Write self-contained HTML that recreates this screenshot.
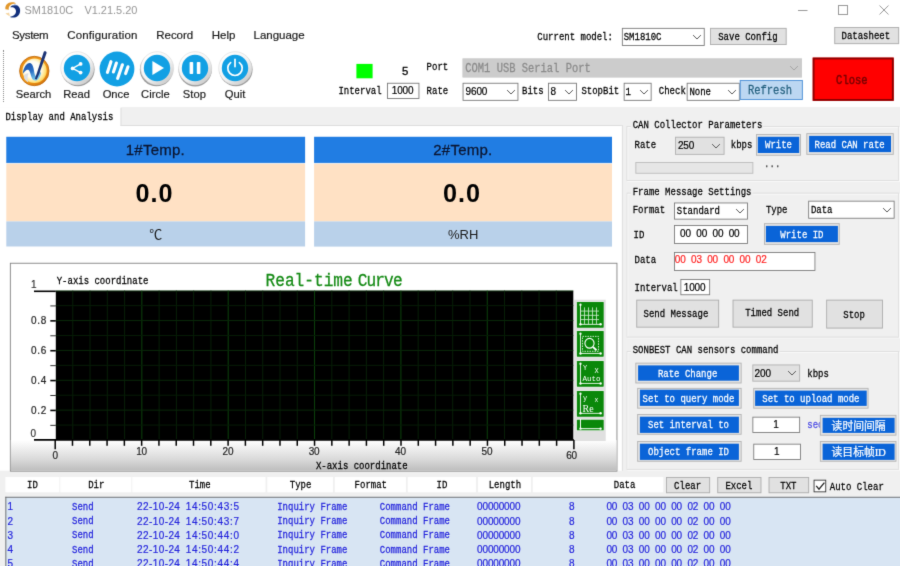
<!DOCTYPE html>
<html lang="en">
<head>
<meta charset="utf-8">
<title>SM1810C V1.21.5.20</title>
<style>
html,body{margin:0;padding:0;}
body{width:900px;height:566px;overflow:hidden;background:#f0f0f0;position:relative;font-family:"Liberation Sans",sans-serif;}
#wrap{position:absolute;left:0;top:0;width:900px;height:566px;overflow:hidden;background:#f0f0f0;filter:url(#soft);}
#app{position:absolute;left:0;top:0;width:1000px;height:629px;transform:scale(0.9);transform-origin:0 0;}
#ov{position:absolute;left:0;top:0;width:900px;height:566px;}
.a{position:absolute;white-space:nowrap;box-sizing:border-box;}
.m{font-family:"Liberation Mono",monospace;transform-origin:0 50%;white-space:pre;-webkit-text-stroke:0.3px currentColor;}
.s{font-family:"Liberation Sans",sans-serif;}
.d{font-family:"Liberation Sans",sans-serif;white-space:pre;font-size:11.1px;line-height:15.56px;letter-spacing:-0.17px;-webkit-text-stroke:0.2px currentColor;}
.cm{font-family:"Liberation Serif",serif;font-size:12px;letter-spacing:-0.3px;}
.c{font-family:"Liberation Sans","Noto Sans CJK SC",sans-serif;color:#fff;font-size:12px;text-align:center;-webkit-text-stroke:0.25px #fff;}
</style>
</head>
<body>
<svg width="0" height="0" style="position:absolute" aria-hidden="true"><defs><filter id="soft" x="0" y="0" width="100%" height="100%" color-interpolation-filters="sRGB"><feConvolveMatrix order="3" kernelMatrix="0.0113 0.0838 0.0113 0.0838 0.6193 0.0838 0.0113 0.0838 0.0113" divisor="1" edgeMode="duplicate" preserveAlpha="true"/></filter></defs></svg>
<div id="wrap">
<div id="app">
<div class="a" style="left:0px;top:0px;width:1000px;height:119.44px;background:#fff;"></div>
<div class="a s" style="top:3.67px;font-size:12.17px;line-height:15.56px;color:#969696;left:27.22px;white-space:pre;word-spacing:2.9px;">SM1810C  V1.21.5.20</div>
<div class="a s" style="top:31.11px;font-size:12.78px;line-height:16.67px;color:#1a1a1a;left:13.33px;letter-spacing:-0.37px;-webkit-text-stroke:0.2px #1a1a1a;">System</div>
<div class="a s" style="top:31.11px;font-size:12.78px;line-height:16.67px;color:#1a1a1a;left:74.67px;letter-spacing:0.17px;-webkit-text-stroke:0.2px #1a1a1a;">Configuration</div>
<div class="a s" style="top:31.11px;font-size:12.78px;line-height:16.67px;color:#1a1a1a;left:173.56px;letter-spacing:0px;-webkit-text-stroke:0.2px #1a1a1a;">Record</div>
<div class="a s" style="top:31.11px;font-size:12.78px;line-height:16.67px;color:#1a1a1a;left:235.22px;letter-spacing:0px;-webkit-text-stroke:0.2px #1a1a1a;">Help</div>
<div class="a s" style="top:31.11px;font-size:12.78px;line-height:16.67px;color:#1a1a1a;left:281.67px;letter-spacing:0px;-webkit-text-stroke:0.2px #1a1a1a;">Language</div>
<div class="a s" style="top:96.67px;font-size:12.44px;line-height:16.67px;color:#1a1a1a;left:-129.33px;width:333.33px;text-align:center;-webkit-text-stroke:0.2px #1a1a1a;">Search</div>
<div class="a s" style="top:96.67px;font-size:12.44px;line-height:16.67px;color:#1a1a1a;left:-81.67px;width:333.33px;text-align:center;-webkit-text-stroke:0.2px #1a1a1a;">Read</div>
<div class="a s" style="top:96.67px;font-size:12.44px;line-height:16.67px;color:#1a1a1a;left:-37.78px;width:333.33px;text-align:center;-webkit-text-stroke:0.2px #1a1a1a;">Once</div>
<div class="a s" style="top:96.67px;font-size:12.44px;line-height:16.67px;color:#1a1a1a;left:6px;width:333.33px;text-align:center;-webkit-text-stroke:0.2px #1a1a1a;">Circle</div>
<div class="a s" style="top:96.67px;font-size:12.44px;line-height:16.67px;color:#1a1a1a;left:49.33px;width:333.33px;text-align:center;-webkit-text-stroke:0.2px #1a1a1a;">Stop</div>
<div class="a s" style="top:96.67px;font-size:12.44px;line-height:16.67px;color:#1a1a1a;left:94.44px;width:333.33px;text-align:center;-webkit-text-stroke:0.2px #1a1a1a;">Quit</div>
<div class="a m" style="left:596.78px;top:33.89px;font-size:13.11px;line-height:15.56px;transform:scaleX(0.7627);">Current model:</div>
<div class="a" style="left:690.78px;top:30.56px;width:92.22px;height:20.33px;background:#fff;border:1px solid #7a7a7a;"></div>
<div class="a m" style="left:693.22px;top:33.5px;font-size:13.11px;line-height:15.56px;transform:scaleX(0.7627);">SM1810C</div>
<div class="a" style="left:788.56px;top:31.11px;width:85.67px;height:19.22px;background:#e1e1e1;border:1px solid #adadad;"></div>
<div class="a m" style="left:797.94px;top:33.5px;font-size:13.11px;line-height:15.56px;transform:scaleX(0.7627);">Save Config</div>
<div class="a" style="left:926.67px;top:30px;width:72px;height:19.22px;background:#e1e1e1;border:1px solid #adadad;"></div>
<div class="a m" style="left:935.22px;top:32.39px;font-size:13.11px;line-height:15.56px;transform:scaleX(0.7627);">Datasheet</div>
<div class="a" style="left:395.56px;top:71.11px;width:18.33px;height:15.56px;background:#00ff00;"></div>
<div class="a d" style="left:446.56px;top:71.56px;font-size:12.6px;-webkit-text-stroke:0.35px #000;">5</div>
<div class="a m" style="left:474px;top:67.22px;font-size:13.11px;line-height:15.56px;transform:scaleX(0.7627);">Port</div>
<div class="a m" style="left:376.22px;top:93.89px;font-size:13.11px;line-height:15.56px;transform:scaleX(0.7627);">Interval</div>
<div class="a" style="left:430px;top:92.22px;width:35.56px;height:17.33px;background:#fff;border:1px solid #7a7a7a;"></div>
<div class="a d" style="left:435.33px;top:93.44px;">1000</div>
<div class="a m" style="left:474px;top:93.89px;font-size:13.11px;line-height:15.56px;transform:scaleX(0.7627);">Rate</div>
<div class="a" style="left:514.44px;top:65.22px;width:377px;height:20.33px;background:#cccccc;border:1px solid #cccccc;"></div>
<div class="a m" style="left:517.33px;top:69.28px;font-size:14px;line-height:15.56px;color:#8a8a8a;transform:scaleX(0.8294);">COM1 USB Serial Port</div>
<div class="a" style="left:514.44px;top:92px;width:61.89px;height:19.89px;background:#fff;border:1px solid #7a7a7a;"></div>
<div class="a d" style="left:517.33px;top:94.5px;">9600</div>
<div class="a m" style="left:580.44px;top:93.89px;font-size:13.11px;line-height:15.56px;transform:scaleX(0.7627);">Bits</div>
<div class="a" style="left:608.89px;top:92px;width:32.56px;height:19.89px;background:#fff;border:1px solid #7a7a7a;"></div>
<div class="a d" style="left:611.78px;top:94.5px;">8</div>
<div class="a m" style="left:646.33px;top:93.89px;font-size:13.11px;line-height:15.56px;transform:scaleX(0.7627);">StopBit</div>
<div class="a" style="left:692.56px;top:92px;width:31.89px;height:19.89px;background:#fff;border:1px solid #7a7a7a;"></div>
<div class="a m" style="left:695.44px;top:94.72px;font-size:13.11px;line-height:15.56px;transform:scaleX(0.7627);">1</div>
<div class="a m" style="left:732.11px;top:93.89px;font-size:13.11px;line-height:15.56px;transform:scaleX(0.7627);">Check</div>
<div class="a" style="left:763.33px;top:92px;width:58.89px;height:19.89px;background:#fff;border:1px solid #7a7a7a;"></div>
<div class="a m" style="left:766.22px;top:94.72px;font-size:13.11px;line-height:15.56px;transform:scaleX(0.7627);">None</div>
<div class="a" style="left:822.22px;top:88.89px;width:69.67px;height:21.89px;background:#bcd7f2;border:1px solid #4a8fd8;"></div>
<div class="a m" style="left:831.28px;top:92.78px;font-size:14.44px;line-height:15.56px;color:#24607f;transform:scaleX(0.8077);">Refresh</div>
<div class="a" style="left:902.67px;top:64.22px;width:89.89px;height:48px;background:#ff0000;border:2px solid #8a0000;"></div>
<div class="a m" style="left:928.72px;top:82.33px;font-size:14.44px;line-height:15.56px;color:#7a0000;transform:scaleX(0.8077);-webkit-text-stroke:0.6px #7a0000;">Close</div>
<div class="a" style="left:0px;top:119.44px;width:133.89px;height:21.67px;background:#fff;"></div>
<div class="a" style="left:0px;top:139.78px;width:691.11px;height:383.56px;background:#fff;"></div>
<div class="a" style="left:133.89px;top:120px;width:557.22px;height:20px;background:#f0f0f0;border-bottom:1px solid #dcdcdc;border-left:1px solid #dcdcdc;box-sizing:border-box;"></div>
<div class="a" style="left:691.11px;top:138.89px;width:1.11px;height:384.44px;background:#dcdcdc;"></div>
<div class="a m" style="left:5.67px;top:122px;font-size:13.11px;line-height:15.56px;transform:scaleX(0.7627);">Display and Analysis</div>
<div class="a" style="left:7px;top:151.89px;width:331.89px;height:30.33px;background:#e4ebf3;"></div>
<div class="a" style="left:7px;top:151.89px;width:331.89px;height:28.78px;background:#217de3;"></div>
<div class="a" style="left:7px;top:181.89px;width:331.89px;height:64.11px;background:#ffe1c4;"></div>
<div class="a" style="left:7px;top:246px;width:331.89px;height:28.22px;background:#b9d1ea;"></div>
<div class="a s" style="top:155.56px;font-size:16.67px;line-height:22.22px;color:#0b1530;left:5.94px;width:333.33px;text-align:center;letter-spacing:0.28px;-webkit-text-stroke:0.28px #0b1530;">1#Temp.</div>
<div class="a s" style="top:196.67px;font-size:28px;line-height:36.67px;color:#000;left:4.94px;width:333.33px;text-align:center;font-weight:bold;letter-spacing:1.11px;">0.0</div>
<div class="a s" style="top:251.11px;font-size:14.44px;line-height:18.89px;color:#1a1a1a;left:6.28px;width:333.33px;text-align:center;font-family:'Liberation Sans','Noto Sans CJK SC',sans-serif;">℃</div>
<div class="a" style="left:348.89px;top:151.89px;width:331.44px;height:30.33px;background:#e4ebf3;"></div>
<div class="a" style="left:348.89px;top:151.89px;width:331.44px;height:28.78px;background:#217de3;"></div>
<div class="a" style="left:348.89px;top:181.89px;width:331.44px;height:64.11px;background:#ffe1c4;"></div>
<div class="a" style="left:348.89px;top:246px;width:331.44px;height:28.22px;background:#b9d1ea;"></div>
<div class="a s" style="top:155.56px;font-size:16.67px;line-height:22.22px;color:#0b1530;left:347.61px;width:333.33px;text-align:center;letter-spacing:0.28px;-webkit-text-stroke:0.28px #0b1530;">2#Temp.</div>
<div class="a s" style="top:196.67px;font-size:28px;line-height:36.67px;color:#000;left:346.61px;width:333.33px;text-align:center;font-weight:bold;letter-spacing:1.11px;">0.0</div>
<div class="a s" style="top:251.11px;font-size:14.44px;line-height:18.89px;color:#1a1a1a;left:347.94px;width:333.33px;text-align:center;font-family:'Liberation Sans','Noto Sans CJK SC',sans-serif;">%RH</div>
<div class="a" style="left:11.11px;top:291.67px;width:675.33px;height:232px;background:#fff;border:1px solid #828282;"></div>
<div class="a" style="left:12.22px;top:488.89px;width:673.11px;height:33.67px;background:linear-gradient(#ffffff 0%, #f0f0f0 25%, #d8d8d8 65%, #bdbdbd 100%);"></div>
<div class="a d" style="left:34.33px;top:309.11px;color:#333;">1</div>
<div class="a d" style="left:34.44px;top:448.82px;color:#222;letter-spacing:0.86px;">0.2</div>
<div class="a d" style="left:34.44px;top:415.64px;color:#222;letter-spacing:0.86px;">0.4</div>
<div class="a d" style="left:34.44px;top:382.47px;color:#222;letter-spacing:0.86px;">0.6</div>
<div class="a d" style="left:34.44px;top:349.29px;color:#222;letter-spacing:0.86px;">0.8</div>
<div class="a d" style="left:34px;top:473.67px;color:#333;">0</div>
<div class="a d" style="left:58.22px;top:498.89px;color:#222;">0</div>
<div class="a d" style="left:151.28px;top:494.78px;color:#222;">10</div>
<div class="a d" style="left:247.33px;top:494.78px;color:#222;">20</div>
<div class="a d" style="left:342.94px;top:494.78px;color:#222;">30</div>
<div class="a d" style="left:439px;top:494.78px;color:#222;">40</div>
<div class="a d" style="left:535.06px;top:494.78px;color:#222;">50</div>
<div class="a d" style="left:629.11px;top:498.89px;color:#222;">60</div>
<div class="a m" style="left:63.44px;top:305.22px;font-size:11.78px;line-height:15.56px;transform:scaleX(0.8491);">Y-axis coordinate</div>
<div class="a m" style="left:350.67px;top:511.22px;font-size:11.78px;line-height:15.56px;transform:scaleX(0.8491);">X-axis coordinate</div>
<div class="a m" style="left:295.11px;top:300.89px;font-size:20.22px;line-height:24.44px;color:#148a14;transform:scaleX(0.8883);word-spacing:-5.88px;">Real-time <span style="letter-spacing:-1.13px">Curve</span></div>
<div class="a" style="left:637.78px;top:333.33px;width:35px;height:156.67px;background:#e0e0e0;"></div>
<div class="a" style="left:696.11px;top:139.56px;width:303px;height:61px;border:1px solid #dedede;box-shadow:inset 1px 1px 0 rgba(255,255,255,0.75), 1px 1px 0 rgba(255,255,255,0.75);"></div>
<div class="a" style="left:701.11px;top:132.89px;width:147.33px;height:14.44px;background:#f0f0f0;"></div>
<div class="a m" style="left:702.78px;top:131.33px;font-size:13.11px;line-height:15.56px;transform:scaleX(0.7627);">CAN Collector Parameters</div>
<div class="a m" style="left:705.11px;top:154.44px;font-size:13.11px;line-height:15.56px;transform:scaleX(0.7627);">Rate</div>
<div class="a" style="left:750.33px;top:151.89px;width:54.33px;height:19.78px;background:#e1e1e1;border:1px solid #b2b2b2;"></div>
<div class="a d" style="left:753.22px;top:155px;">250</div>
<div class="a m" style="left:811.56px;top:154.44px;font-size:13.11px;line-height:15.56px;transform:scaleX(0.7627);">kbps</div>
<div class="a" style="left:839.78px;top:149.11px;width:50.56px;height:23.44px;background:#e4e4e4;border:1px solid #b4b4b4;"></div>
<div class="a" style="left:842.22px;top:151.89px;width:45.78px;height:18.11px;background:#0a64d8;"></div>
<div class="a m" style="left:849.67px;top:154.28px;font-size:13.11px;line-height:15.56px;color:#fff;transform:scaleX(0.7627);">Write</div>
<div class="a" style="left:895.89px;top:147.78px;width:97.11px;height:23.89px;background:#e4e4e4;border:1px solid #b4b4b4;"></div>
<div class="a" style="left:898.56px;top:150.89px;width:91.78px;height:18px;background:#0a64d8;"></div>
<div class="a m" style="left:905px;top:153.22px;font-size:13.11px;line-height:15.56px;color:#fff;transform:scaleX(0.7627);">Read CAN rate</div>
<div class="a" style="left:705.56px;top:180px;width:131.89px;height:12.56px;background:#e6e6e6;border:1px solid #bcbcbc;"></div>
<div class="a m" style="left:848.67px;top:174.56px;font-size:13.11px;line-height:15.56px;color:#444;transform:scaleX(0.7627);">...</div>
<div class="a" style="left:696.11px;top:213.89px;width:303px;height:161.44px;border:1px solid #dedede;box-shadow:inset 1px 1px 0 rgba(255,255,255,0.75), 1px 1px 0 rgba(255,255,255,0.75);"></div>
<div class="a" style="left:701.11px;top:207.22px;width:135.33px;height:14.44px;background:#f0f0f0;"></div>
<div class="a m" style="left:702.78px;top:205.89px;font-size:13.11px;line-height:15.56px;transform:scaleX(0.7627);">Frame Message Settings</div>
<div class="a m" style="left:702.89px;top:226.44px;font-size:13.11px;line-height:15.56px;transform:scaleX(0.7627);">Format</div>
<div class="a" style="left:749.11px;top:225px;width:82.33px;height:19.44px;background:#fff;border:1px solid #7a7a7a;"></div>
<div class="a m" style="left:752px;top:226.72px;font-size:13.11px;line-height:15.56px;transform:scaleX(0.7627);">Standard</div>
<div class="a m" style="left:851px;top:225.78px;font-size:13.11px;line-height:15.56px;transform:scaleX(0.7627);">Type</div>
<div class="a" style="left:898.11px;top:222.56px;width:96.33px;height:20.44px;background:#fff;border:1px solid #7a7a7a;"></div>
<div class="a m" style="left:901px;top:225.56px;font-size:13.11px;line-height:15.56px;transform:scaleX(0.7627);">Data</div>
<div class="a m" style="left:704.22px;top:253px;font-size:13.11px;line-height:15.56px;transform:scaleX(0.7627);">ID</div>
<div class="a" style="left:748.89px;top:250px;width:82.56px;height:20.56px;background:#fff;border:1px solid #7a7a7a;"></div>
<div class="a d" style="left:755.67px;top:252.28px;word-spacing:3.09px;">00 00 00 00</div>
<div class="a" style="left:848.56px;top:248.11px;width:84.78px;height:23.78px;background:#e4e4e4;border:1px solid #b4b4b4;"></div>
<div class="a" style="left:851.33px;top:250.89px;width:79.56px;height:18px;background:#0a64d8;"></div>
<div class="a m" style="left:866.67px;top:253.22px;font-size:13.11px;line-height:15.56px;color:#fff;transform:scaleX(0.7627);">Write ID</div>
<div class="a m" style="left:705.11px;top:281.11px;font-size:13.11px;line-height:15.56px;transform:scaleX(0.7627);">Data</div>
<div class="a" style="left:748.56px;top:279.56px;width:157px;height:21px;background:#fff;border:1px solid #7a7a7a;"></div>
<div class="a d" style="left:749.78px;top:280.72px;color:#ff2020;word-spacing:3.09px;">00 03 00 00 00 02</div>
<div class="a m" style="left:705.11px;top:311.67px;font-size:13.11px;line-height:15.56px;transform:scaleX(0.7627);">Interval</div>
<div class="a" style="left:755.56px;top:310.22px;width:33.33px;height:17.56px;background:#fff;border:1px solid #7a7a7a;"></div>
<div class="a d" style="left:759.78px;top:311.56px;">1000</div>
<div class="a" style="left:706.89px;top:333px;width:91.67px;height:31.44px;background:#e1e1e1;border:1px solid #adadad;"></div>
<div class="a m" style="left:715.11px;top:341.06px;font-size:13.11px;line-height:15.56px;transform:scaleX(0.7627);">Send Message</div>
<div class="a" style="left:813.56px;top:333px;width:89.22px;height:31px;background:#e1e1e1;border:1px solid #adadad;"></div>
<div class="a m" style="left:827.72px;top:340.17px;font-size:13.11px;line-height:15.56px;transform:scaleX(0.7627);">Timed Send</div>
<div class="a" style="left:917.56px;top:333px;width:63.89px;height:31.78px;background:#e1e1e1;border:1px solid #adadad;"></div>
<div class="a m" style="left:937.06px;top:341.67px;font-size:13.11px;line-height:15.56px;transform:scaleX(0.7627);">Stop</div>
<div class="a" style="left:696.11px;top:390.33px;width:303px;height:131.67px;border:1px solid #dedede;box-shadow:inset 1px 1px 0 rgba(255,255,255,0.75), 1px 1px 0 rgba(255,255,255,0.75);"></div>
<div class="a" style="left:701.11px;top:383.67px;width:165.33px;height:14.44px;background:#f0f0f0;"></div>
<div class="a m" style="left:702.78px;top:381.44px;font-size:13.11px;line-height:15.56px;transform:scaleX(0.7627);">SONBEST CAN sensors command</div>
<div class="a" style="left:705.89px;top:403.11px;width:117.67px;height:23.22px;background:#e4e4e4;border:1px solid #b4b4b4;"></div>
<div class="a" style="left:708.67px;top:406.11px;width:112.22px;height:17px;background:#0a64d8;"></div>
<div class="a m" style="left:731.33px;top:408.17px;font-size:13.11px;line-height:15.56px;color:#fff;transform:scaleX(0.7627);">Rate Change</div>
<div class="a" style="left:835.56px;top:404.78px;width:53.89px;height:19.33px;background:#e1e1e1;border:1px solid #b2b2b2;"></div>
<div class="a d" style="left:838.44px;top:407.67px;">200</div>
<div class="a m" style="left:896.78px;top:408.11px;font-size:13.11px;line-height:15.56px;transform:scaleX(0.7627);">kbps</div>
<div class="a" style="left:707.78px;top:430.56px;width:115.78px;height:23.11px;background:#e4e4e4;border:1px solid #b4b4b4;"></div>
<div class="a" style="left:710.56px;top:433.33px;width:110.33px;height:17.22px;background:#0a64d8;"></div>
<div class="a m" style="left:714.28px;top:435.5px;font-size:13.11px;line-height:15.56px;color:#fff;transform:scaleX(0.7627);">Set to query mode</div>
<div class="a" style="left:836.67px;top:431.11px;width:128.67px;height:23px;background:#e4e4e4;border:1px solid #b4b4b4;"></div>
<div class="a" style="left:839.44px;top:433.89px;width:123.11px;height:17.44px;background:#0a64d8;"></div>
<div class="a m" style="left:846.56px;top:436.17px;font-size:13.11px;line-height:15.56px;color:#fff;transform:scaleX(0.7627);">Set to upload mode</div>
<div class="a" style="left:707.78px;top:460.44px;width:115.78px;height:22.89px;background:#e4e4e4;border:1px solid #b4b4b4;"></div>
<div class="a" style="left:710.56px;top:463.11px;width:110.33px;height:17.44px;background:#0a64d8;"></div>
<div class="a m" style="left:720.28px;top:465.39px;font-size:13.11px;line-height:15.56px;color:#fff;transform:scaleX(0.7627);">Set interval to</div>
<div class="a" style="left:835.56px;top:462.56px;width:53.89px;height:18px;background:#fff;border:1px solid #7a7a7a;"></div>
<div class="a d" style="left:859.06px;top:464.11px;">1</div>
<div class="a m" style="left:896.78px;top:465px;font-size:13.11px;line-height:15.56px;color:#4c4ce4;transform:scaleX(0.7627);">sec</div>
<div class="a" style="left:911.44px;top:461.11px;width:84.89px;height:23.11px;background:#e4e4e4;border:1px solid #b4b4b4;"></div>
<div class="a" style="left:914.44px;top:463.89px;width:79.11px;height:17.56px;background:#0a64d8;"></div>
<div class="a c" style="left:914.44px;top:466.33px;width:79.11px;height:17.56px;line-height:17.56px;">读时间间隔</div>
<div class="a" style="left:707.78px;top:490.33px;width:115.78px;height:23px;background:#e4e4e4;border:1px solid #b4b4b4;"></div>
<div class="a" style="left:710.56px;top:493px;width:110.33px;height:17.78px;background:#0a64d8;"></div>
<div class="a m" style="left:720.28px;top:495.44px;font-size:13.11px;line-height:15.56px;color:#fff;transform:scaleX(0.7627);">Object frame ID</div>
<div class="a" style="left:836.67px;top:492.56px;width:53.67px;height:18px;background:#fff;border:1px solid #7a7a7a;"></div>
<div class="a d" style="left:860.06px;top:494.11px;">1</div>
<div class="a" style="left:911.44px;top:490.22px;width:84.89px;height:23.11px;background:#e4e4e4;border:1px solid #b4b4b4;"></div>
<div class="a" style="left:914.44px;top:493px;width:79.11px;height:17.56px;background:#0a64d8;"></div>
<div class="a c" style="left:914.44px;top:495.44px;width:79.11px;height:17.56px;line-height:17.56px;">读目标帧<span class="cm">ID</span></div>
<div class="a" style="left:5.89px;top:529.67px;width:59.67px;height:17.44px;background:#fff;"></div>
<div class="a m" style="left:30.39px;top:530.89px;font-size:13.11px;line-height:15.56px;transform:scaleX(0.7627);">ID</div>
<div class="a" style="left:67.11px;top:529.67px;width:78.67px;height:17.44px;background:#fff;"></div>
<div class="a m" style="left:98.11px;top:530.89px;font-size:13.11px;line-height:15.56px;transform:scaleX(0.7627);">Dir</div>
<div class="a" style="left:147.22px;top:529.67px;width:147.78px;height:17.44px;background:#fff;"></div>
<div class="a m" style="left:209.78px;top:530.89px;font-size:13.11px;line-height:15.56px;transform:scaleX(0.7627);">Time</div>
<div class="a" style="left:297px;top:529.67px;width:73px;height:17.44px;background:#fff;"></div>
<div class="a m" style="left:322.17px;top:530.89px;font-size:13.11px;line-height:15.56px;transform:scaleX(0.7627);">Type</div>
<div class="a" style="left:372px;top:529.67px;width:78.56px;height:17.44px;background:#fff;"></div>
<div class="a m" style="left:393.94px;top:530.89px;font-size:13.11px;line-height:15.56px;transform:scaleX(0.7627);">Format</div>
<div class="a" style="left:452.56px;top:529.67px;width:76.33px;height:17.44px;background:#fff;"></div>
<div class="a m" style="left:485.39px;top:530.89px;font-size:13.11px;line-height:15.56px;transform:scaleX(0.7627);">ID</div>
<div class="a" style="left:530.89px;top:529.67px;width:59.11px;height:17.44px;background:#fff;"></div>
<div class="a m" style="left:543.11px;top:530.89px;font-size:13.11px;line-height:15.56px;transform:scaleX(0.7627);">Length</div>
<div class="a" style="left:592px;top:529.67px;width:144.67px;height:17.44px;background:#fff;"></div>
<div class="a m" style="left:682.22px;top:530.89px;font-size:13.11px;line-height:15.56px;transform:scaleX(0.7627);">Data</div>
<div class="a" style="left:740px;top:530.22px;width:48.67px;height:17.56px;background:#e1e1e1;border:1px solid #adadad;"></div>
<div class="a m" style="left:748.89px;top:531.78px;font-size:13.11px;line-height:15.56px;transform:scaleX(0.7627);">Clear</div>
<div class="a" style="left:797px;top:530.22px;width:48.56px;height:17.56px;background:#e1e1e1;border:1px solid #adadad;"></div>
<div class="a m" style="left:805.83px;top:531.78px;font-size:13.11px;line-height:15.56px;transform:scaleX(0.7627);">Excel</div>
<div class="a" style="left:853.78px;top:530.22px;width:45.33px;height:17.56px;background:#e1e1e1;border:1px solid #adadad;"></div>
<div class="a m" style="left:867px;top:531.78px;font-size:13.11px;line-height:15.56px;transform:scaleX(0.7627);">TXT</div>
<div class="a" style="left:904.22px;top:533.44px;width:13.44px;height:13.44px;background:#fff;border:1px solid #333;"></div>
<div class="a m" style="left:922.33px;top:533px;font-size:13.11px;line-height:15.56px;transform:scaleX(0.7627);">Auto Clear</div>
<div class="a" style="left:6.11px;top:552.44px;width:996.11px;height:80.89px;background:#d8e5f3;border-top:1.7px solid #686868;border-left:1.7px solid #686868;"></div>
<div class="a d" style="left:8.44px;top:555.89px;color:#2424dc;">1</div>
<div class="a m" style="left:79.56px;top:555.56px;font-size:13.11px;line-height:15.56px;color:#2424dc;transform:scaleX(0.7627);">Send</div>
<div class="a d" style="left:152.33px;top:555.89px;color:#2424dc;letter-spacing:0.45px;word-spacing:2.47px;">22-10-24 <span style="letter-spacing:0.75px">14:50:43:5</span></div>
<div class="a m" style="left:307.89px;top:555.56px;font-size:13.11px;line-height:15.56px;color:#2424dc;transform:scaleX(0.7627);">Inquiry Frame</div>
<div class="a m" style="left:421.78px;top:555.56px;font-size:13.11px;line-height:15.56px;color:#2424dc;transform:scaleX(0.7627);">Command Frame</div>
<div class="a d" style="left:530.11px;top:555.89px;color:#2424dc;">00000000</div>
<div class="a d" style="left:632.11px;top:555.89px;color:#2424dc;">8</div>
<div class="a d" style="left:673.78px;top:555.89px;color:#2424dc;word-spacing:3.09px;">00 03 00 00 00 02 00 00</div>
<div class="a d" style="left:8.44px;top:571.72px;color:#2424dc;">2</div>
<div class="a m" style="left:79.56px;top:571.39px;font-size:13.11px;line-height:15.56px;color:#2424dc;transform:scaleX(0.7627);">Send</div>
<div class="a d" style="left:152.33px;top:571.72px;color:#2424dc;letter-spacing:0.45px;word-spacing:2.47px;">22-10-24 <span style="letter-spacing:0.75px">14:50:43:7</span></div>
<div class="a m" style="left:307.89px;top:571.39px;font-size:13.11px;line-height:15.56px;color:#2424dc;transform:scaleX(0.7627);">Inquiry Frame</div>
<div class="a m" style="left:421.78px;top:571.39px;font-size:13.11px;line-height:15.56px;color:#2424dc;transform:scaleX(0.7627);">Command Frame</div>
<div class="a d" style="left:530.11px;top:571.72px;color:#2424dc;">00000000</div>
<div class="a d" style="left:632.11px;top:571.72px;color:#2424dc;">8</div>
<div class="a d" style="left:673.78px;top:571.72px;color:#2424dc;word-spacing:3.09px;">00 03 00 00 00 02 00 00</div>
<div class="a d" style="left:8.44px;top:587.56px;color:#2424dc;">3</div>
<div class="a m" style="left:79.56px;top:587.22px;font-size:13.11px;line-height:15.56px;color:#2424dc;transform:scaleX(0.7627);">Send</div>
<div class="a d" style="left:152.33px;top:587.56px;color:#2424dc;letter-spacing:0.45px;word-spacing:2.47px;">22-10-24 <span style="letter-spacing:0.75px">14:50:44:0</span></div>
<div class="a m" style="left:307.89px;top:587.22px;font-size:13.11px;line-height:15.56px;color:#2424dc;transform:scaleX(0.7627);">Inquiry Frame</div>
<div class="a m" style="left:421.78px;top:587.22px;font-size:13.11px;line-height:15.56px;color:#2424dc;transform:scaleX(0.7627);">Command Frame</div>
<div class="a d" style="left:530.11px;top:587.56px;color:#2424dc;">00000000</div>
<div class="a d" style="left:632.11px;top:587.56px;color:#2424dc;">8</div>
<div class="a d" style="left:673.78px;top:587.56px;color:#2424dc;word-spacing:3.09px;">00 03 00 00 00 02 00 00</div>
<div class="a d" style="left:8.44px;top:603.39px;color:#2424dc;">4</div>
<div class="a m" style="left:79.56px;top:603.06px;font-size:13.11px;line-height:15.56px;color:#2424dc;transform:scaleX(0.7627);">Send</div>
<div class="a d" style="left:152.33px;top:603.39px;color:#2424dc;letter-spacing:0.45px;word-spacing:2.47px;">22-10-24 <span style="letter-spacing:0.75px">14:50:44:2</span></div>
<div class="a m" style="left:307.89px;top:603.06px;font-size:13.11px;line-height:15.56px;color:#2424dc;transform:scaleX(0.7627);">Inquiry Frame</div>
<div class="a m" style="left:421.78px;top:603.06px;font-size:13.11px;line-height:15.56px;color:#2424dc;transform:scaleX(0.7627);">Command Frame</div>
<div class="a d" style="left:530.11px;top:603.39px;color:#2424dc;">00000000</div>
<div class="a d" style="left:632.11px;top:603.39px;color:#2424dc;">8</div>
<div class="a d" style="left:673.78px;top:603.39px;color:#2424dc;word-spacing:3.09px;">00 03 00 00 00 02 00 00</div>
<div class="a d" style="left:8.44px;top:619.22px;color:#2424dc;">5</div>
<div class="a m" style="left:79.56px;top:618.89px;font-size:13.11px;line-height:15.56px;color:#2424dc;transform:scaleX(0.7627);">Send</div>
<div class="a d" style="left:152.33px;top:619.22px;color:#2424dc;letter-spacing:0.45px;word-spacing:2.47px;">22-10-24 <span style="letter-spacing:0.75px">14:50:44:4</span></div>
<div class="a m" style="left:307.89px;top:618.89px;font-size:13.11px;line-height:15.56px;color:#2424dc;transform:scaleX(0.7627);">Inquiry Frame</div>
<div class="a m" style="left:421.78px;top:618.89px;font-size:13.11px;line-height:15.56px;color:#2424dc;transform:scaleX(0.7627);">Command Frame</div>
<div class="a d" style="left:530.11px;top:619.22px;color:#2424dc;">00000000</div>
<div class="a d" style="left:632.11px;top:619.22px;color:#2424dc;">8</div>
<div class="a d" style="left:673.78px;top:619.22px;color:#2424dc;word-spacing:3.09px;">00 03 00 00 00 02 00 00</div>
</div>
<div id="ov">
<svg class="a" style="left:0;top:0" width="30" height="22" viewBox="0 0 30 22">
<path d="M5.4 9.2 C4.8 5.2 7.8 2.5 11.6 2.3 C13.6 2.2 15.2 2.7 16.2 3.6 C13.6 3.5 11.2 4.2 9.8 5.8 C8.7 7 8.5 8.4 8.9 9.8 Z" fill="#e2982c"/>
<path d="M10.2 7.3 C11.8 4.7 15.6 3.9 18.1 5.9 C20.8 8.1 20.8 12.7 18.3 15.4 C16.1 17.7 12.6 18.1 9.9 16.9 C13 16.6 15.7 14.8 16 11.6 C16.3 8.6 13.5 6.5 10.2 7.3 Z" fill="#12307c"/>
<path d="M11.4 5.9 C13.4 4.4 16.2 4.4 18.1 5.9 C16 5.2 13.6 5.3 11.4 5.9 Z" fill="#7f9fd4"/>
<path d="M5.6 13 C6.6 14.9 8.4 15.8 10.3 15.8 C9.5 14.8 9.1 13.7 9.1 12.6 C7.9 13.2 6.7 13.3 5.6 13 Z" fill="#f6d6a2"/>
</svg>
<svg class="a" style="left:790px;top:0" width="110" height="22" viewBox="0 0 110 22" fill="none" stroke="#9a9a9a" stroke-width="1">
<path d="M8 10.5 H17.5"/><rect x="48.5" y="5.5" width="9" height="9"/><path d="M89.5 5.5 L98.5 14.5 M98.5 5.5 L89.5 14.5"/></svg>
<div class="a" style="left:3.4px;top:50px;width:0;height:52px;border-left:1.6px dotted #8c8c8c"></div>
<svg class="a" style="left:0;top:0" width="0" height="0"><defs><linearGradient id="rg" x1="0.15" y1="0.1" x2="0.85" y2="0.95"><stop offset="0" stop-color="#ffffff"/><stop offset="0.55" stop-color="#f2f2f2"/><stop offset="1" stop-color="#c9c9c9"/></linearGradient></defs></svg>
<svg class="a" style="left:10px;top:44px" width="50" height="50" viewBox="0 0 50 50">
<defs><radialGradient id="sg" cx="0.42" cy="0.45" r="0.66"><stop offset="0" stop-color="#ffffff"/><stop offset="0.5" stop-color="#fffdf4"/><stop offset="0.8" stop-color="#ffe27a"/><stop offset="1" stop-color="#f9b022"/></radialGradient>
<linearGradient id="so" x1="0" y1="0" x2="1" y2="1"><stop offset="0" stop-color="#e88a12"/><stop offset="0.5" stop-color="#f29a1a"/><stop offset="1" stop-color="#d06c06"/></linearGradient>
<linearGradient id="sw" x1="0" y1="0" x2="0.6" y2="1"><stop offset="0" stop-color="#1c4fa8"/><stop offset="0.55" stop-color="#2a6fc4"/><stop offset="1" stop-color="#7fd0f0"/></linearGradient></defs>
<circle cx="24.3" cy="27" r="14.7" fill="url(#so)" stroke="#b9660c" stroke-width="0.8"/>
<circle cx="24.6" cy="26.8" r="12.2" fill="url(#sg)"/>
<path d="M14.2 31.5 C13 33 14.8 37 18.5 38.2 C17.2 35.6 17 33 18.6 29.5 C17.2 29 15.4 30 14.2 31.5 Z" fill="#dcdfe6"/>
<path d="M12.8 29.8 C13.6 22.6 17.6 17.6 21 19.4 C24.4 21.4 23.8 31 25.8 32 C27.2 32.6 28.2 29.6 29.4 25.6 L31 29.6 C29.6 34.2 27.8 37 25 36.6 C20.4 36 21 27.4 18.6 26 C16.8 25 14.8 27 12.8 29.8 Z" fill="url(#sw)"/>
<path d="M24.8 35 C28 26.4 30.6 17.4 33.8 7.8 C34.8 6.8 36.8 7.4 36.6 9 C33.4 17.8 30.6 27 26.8 35.6 Z" fill="#1c3476"/>
</svg>
<svg class="a" style="left:57.2px;top:48.0px" width="40" height="40" viewBox="-20 -20 40 40"><circle cx="0.9" cy="1.5" r="16.7" fill="#9c9c9c"/><circle cx="0.2" cy="0.2" r="16.5" fill="url(#rg)" stroke="#dedede" stroke-width="0.7"/><circle cx="0" cy="0" r="13.2" fill="#12a0e4"/><g fill="#fff" stroke="#fff" stroke-width="0"><circle cx="-4.4" cy="0.4" r="1.9"/><circle cx="3.6" cy="-4.1" r="1.9"/><circle cx="3.6" cy="4.6" r="1.9"/><path d="M-4.4 0.4 L3.6 -4.1 M-4.4 0.4 L3.6 4.6" stroke-width="1.3" fill="none"/></g></svg>
<svg class="a" style="left:97.2px;top:48.5px" width="40" height="40" viewBox="-20 -20 40 40"><circle cx="0" cy="0" r="17.4" fill="#12a0e4"/><g stroke="#fff" stroke-width="3.1" stroke-linecap="round" fill="none"><path d="M-6 -7.4 L-9.6 3.4"/><path d="M-0.6 -6 L-3.6 3"/><path d="M5.4 -4.2 L0.6 9.4"/><path d="M11 -2.2 L8.6 4.6"/></g></svg>
<svg class="a" style="left:137.2px;top:47.7px" width="40" height="40" viewBox="-20 -20 40 40"><circle cx="-0.5" cy="1.6" r="16.7" fill="#9c9c9c"/><circle cx="0.2" cy="0.2" r="16.5" fill="url(#rg)" stroke="#dedede" stroke-width="0.7"/><circle cx="0" cy="0" r="13.2" fill="#12a0e4"/><path d="M-4.6 -7 L7 0 L-4.6 7 Z" fill="#fff"/></svg>
<svg class="a" style="left:175.4px;top:47.7px" width="40" height="40" viewBox="-20 -20 40 40"><circle cx="0.2" cy="1.7" r="16.7" fill="#9c9c9c"/><circle cx="0.2" cy="0.2" r="16.5" fill="url(#rg)" stroke="#dedede" stroke-width="0.7"/><circle cx="0" cy="0" r="13.2" fill="#12a0e4"/><g fill="#fff"><rect x="-5.4" y="-6" width="3.6" height="12" rx="0.8"/><rect x="1.8" y="-6" width="3.6" height="12" rx="0.8"/></g></svg>
<svg class="a" style="left:214.7px;top:47.8px" width="40" height="40" viewBox="-20 -20 40 40"><circle cx="0.9" cy="1.5" r="16.7" fill="#9c9c9c"/><circle cx="0.2" cy="0.2" r="16.5" fill="url(#rg)" stroke="#dedede" stroke-width="0.7"/><circle cx="0" cy="0" r="13.2" fill="#12a0e4"/><g stroke="#fff" stroke-width="1.7" fill="none" stroke-linecap="round"><path d="M-4.4 -5.4 A7.2 7.2 0 1 0 4.4 -5.4"/><path d="M0 -8.6 V-1.4"/></g></svg>
<svg class="a" style="left:691.50px;top:32.65px" width="10" height="8" viewBox="-5 -4 10 8"><path d="M-3.9 -1.9 L0 2 L3.9 -1.9" fill="none" stroke="#505050" stroke-width="0.95"/></svg>
<svg class="a" style="left:789.10px;top:63.85px" width="10" height="8" viewBox="-5 -4 10 8"><path d="M-3.9 -1.9 L0 2 L3.9 -1.9" fill="none" stroke="#a0a0a0" stroke-width="0.95"/></svg>
<svg class="a" style="left:505.50px;top:87.75px" width="10" height="8" viewBox="-5 -4 10 8"><path d="M-3.9 -1.9 L0 2 L3.9 -1.9" fill="none" stroke="#505050" stroke-width="0.95"/></svg>
<svg class="a" style="left:564.10px;top:87.75px" width="10" height="8" viewBox="-5 -4 10 8"><path d="M-3.9 -1.9 L0 2 L3.9 -1.9" fill="none" stroke="#505050" stroke-width="0.95"/></svg>
<svg class="a" style="left:638.80px;top:87.75px" width="10" height="8" viewBox="-5 -4 10 8"><path d="M-3.9 -1.9 L0 2 L3.9 -1.9" fill="none" stroke="#505050" stroke-width="0.95"/></svg>
<svg class="a" style="left:726.80px;top:87.75px" width="10" height="8" viewBox="-5 -4 10 8"><path d="M-3.9 -1.9 L0 2 L3.9 -1.9" fill="none" stroke="#505050" stroke-width="0.95"/></svg>
<svg class="a" style="left:0;top:255px" width="625" height="220" viewBox="0 255 625 220"><rect x="55.8" y="290.7" width="517.5" height="149.3" fill="#000"/><path d="M55.8 290.9 H573.3" stroke="#1d4d1d" stroke-width="0.7"/><path d="M72.77 290.7 V440.0" stroke="#071f07" stroke-width="1"/><path d="M90.04 290.7 V440.0" stroke="#071f07" stroke-width="1"/><path d="M107.31 290.7 V440.0" stroke="#071f07" stroke-width="1"/><path d="M124.58 290.7 V440.0" stroke="#071f07" stroke-width="1"/><path d="M141.85 290.7 V440.0" stroke="#0b420b" stroke-width="1"/><path d="M159.12 290.7 V440.0" stroke="#071f07" stroke-width="1"/><path d="M176.39 290.7 V440.0" stroke="#071f07" stroke-width="1"/><path d="M193.66 290.7 V440.0" stroke="#071f07" stroke-width="1"/><path d="M210.93 290.7 V440.0" stroke="#071f07" stroke-width="1"/><path d="M228.20 290.7 V440.0" stroke="#0b420b" stroke-width="1"/><path d="M245.47 290.7 V440.0" stroke="#071f07" stroke-width="1"/><path d="M262.74 290.7 V440.0" stroke="#071f07" stroke-width="1"/><path d="M280.01 290.7 V440.0" stroke="#071f07" stroke-width="1"/><path d="M297.28 290.7 V440.0" stroke="#071f07" stroke-width="1"/><path d="M314.55 290.7 V440.0" stroke="#0b420b" stroke-width="1"/><path d="M331.82 290.7 V440.0" stroke="#071f07" stroke-width="1"/><path d="M349.09 290.7 V440.0" stroke="#071f07" stroke-width="1"/><path d="M366.36 290.7 V440.0" stroke="#071f07" stroke-width="1"/><path d="M383.63 290.7 V440.0" stroke="#071f07" stroke-width="1"/><path d="M400.90 290.7 V440.0" stroke="#0b420b" stroke-width="1"/><path d="M418.17 290.7 V440.0" stroke="#071f07" stroke-width="1"/><path d="M435.44 290.7 V440.0" stroke="#071f07" stroke-width="1"/><path d="M452.71 290.7 V440.0" stroke="#071f07" stroke-width="1"/><path d="M469.98 290.7 V440.0" stroke="#071f07" stroke-width="1"/><path d="M487.25 290.7 V440.0" stroke="#0b420b" stroke-width="1"/><path d="M504.52 290.7 V440.0" stroke="#071f07" stroke-width="1"/><path d="M521.79 290.7 V440.0" stroke="#071f07" stroke-width="1"/><path d="M539.06 290.7 V440.0" stroke="#071f07" stroke-width="1"/><path d="M556.33 290.7 V440.0" stroke="#071f07" stroke-width="1"/><path d="M55.8 425.07 H573.3" stroke="#061c06" stroke-width="1"/><path d="M55.8 410.14 H573.3" stroke="#082808" stroke-width="1"/><path d="M55.8 395.21 H573.3" stroke="#061c06" stroke-width="1"/><path d="M55.8 380.28 H573.3" stroke="#082808" stroke-width="1"/><path d="M55.8 365.35 H573.3" stroke="#061c06" stroke-width="1"/><path d="M55.8 350.42 H573.3" stroke="#082808" stroke-width="1"/><path d="M55.8 335.49 H573.3" stroke="#061c06" stroke-width="1"/><path d="M55.8 320.56 H573.3" stroke="#082808" stroke-width="1"/><path d="M55.8 305.63 H573.3" stroke="#061c06" stroke-width="1"/><path d="M34 291.3 H55.8" stroke="#000" stroke-width="1.6"/><path d="M34 439.8 H573.8" stroke="#000" stroke-width="1.8"/><path d="M55.20 440.0 v9.3" stroke="#000" stroke-width="1.5"/><path d="M72.49 440.0 v5.8" stroke="#000" stroke-width="1.5"/><path d="M89.78 440.0 v5.8" stroke="#000" stroke-width="1.5"/><path d="M107.07 440.0 v5.8" stroke="#000" stroke-width="1.5"/><path d="M124.36 440.0 v5.8" stroke="#000" stroke-width="1.5"/><path d="M141.65 440.0 v5.8" stroke="#000" stroke-width="1.5"/><path d="M158.94 440.0 v5.8" stroke="#000" stroke-width="1.5"/><path d="M176.23 440.0 v5.8" stroke="#000" stroke-width="1.5"/><path d="M193.52 440.0 v5.8" stroke="#000" stroke-width="1.5"/><path d="M210.81 440.0 v5.8" stroke="#000" stroke-width="1.5"/><path d="M228.10 440.0 v5.8" stroke="#000" stroke-width="1.5"/><path d="M245.39 440.0 v5.8" stroke="#000" stroke-width="1.5"/><path d="M262.68 440.0 v5.8" stroke="#000" stroke-width="1.5"/><path d="M279.97 440.0 v5.8" stroke="#000" stroke-width="1.5"/><path d="M297.26 440.0 v5.8" stroke="#000" stroke-width="1.5"/><path d="M314.55 440.0 v5.8" stroke="#000" stroke-width="1.5"/><path d="M331.84 440.0 v5.8" stroke="#000" stroke-width="1.5"/><path d="M349.13 440.0 v5.8" stroke="#000" stroke-width="1.5"/><path d="M366.42 440.0 v5.8" stroke="#000" stroke-width="1.5"/><path d="M383.71 440.0 v5.8" stroke="#000" stroke-width="1.5"/><path d="M401.00 440.0 v5.8" stroke="#000" stroke-width="1.5"/><path d="M418.29 440.0 v5.8" stroke="#000" stroke-width="1.5"/><path d="M435.58 440.0 v5.8" stroke="#000" stroke-width="1.5"/><path d="M452.87 440.0 v5.8" stroke="#000" stroke-width="1.5"/><path d="M470.16 440.0 v5.8" stroke="#000" stroke-width="1.5"/><path d="M487.45 440.0 v5.8" stroke="#000" stroke-width="1.5"/><path d="M504.74 440.0 v5.8" stroke="#000" stroke-width="1.5"/><path d="M522.03 440.0 v5.8" stroke="#000" stroke-width="1.5"/><path d="M539.32 440.0 v5.8" stroke="#000" stroke-width="1.5"/><path d="M556.61 440.0 v5.8" stroke="#000" stroke-width="1.5"/><path d="M573.90 440.0 v9.3" stroke="#000" stroke-width="1.5"/><path d="M50.3 425.37 H55.8" stroke="#333" stroke-width="1.0"/><path d="M50.3 410.44 H55.8" stroke="#000" stroke-width="1.6"/><path d="M50.3 395.51 H55.8" stroke="#333" stroke-width="1.0"/><path d="M50.3 380.58 H55.8" stroke="#000" stroke-width="1.6"/><path d="M50.3 365.65 H55.8" stroke="#333" stroke-width="1.0"/><path d="M50.3 350.72 H55.8" stroke="#000" stroke-width="1.6"/><path d="M50.3 335.79 H55.8" stroke="#333" stroke-width="1.0"/><path d="M50.3 320.86 H55.8" stroke="#000" stroke-width="1.6"/><path d="M50.3 305.93 H55.8" stroke="#333" stroke-width="1.0"/></svg>
<svg class="a" style="left:575.8px;top:300.7px" width="28.60" height="27.60" viewBox="0 0 28.6 26"  preserveAspectRatio="none"><rect x="0" y="0" width="28.6" height="26" rx="1" fill="#e4ece4"/><rect x="0.9" y="0.9" width="26.8" height="24.2" rx="0.6" fill="#0a880a"/><g stroke="#eef8ee" stroke-width="0.9" fill="#fff"><path d="M4.5 3.5 V22 H25" fill="none"/><circle cx="4.5" cy="3.5" r="1.1" stroke="none"/><circle cx="4.5" cy="22" r="1.2" stroke="none"/><circle cx="24.6" cy="22" r="1.2" stroke="none"/></g><g stroke="#cfeacf" stroke-width="0.8" fill="none"><path d="M8.5 6 V22 M12.5 6 V22 M16.5 6 V22 M20.5 6 V22"/><path d="M4.5 9.5 H23 M4.5 13.5 H23 M4.5 17.5 H23"/></g></svg>
<svg class="a" style="left:575.8px;top:330.3px" width="28.60" height="27.70" viewBox="0 0 28.6 26"  preserveAspectRatio="none"><rect x="0" y="0" width="28.6" height="26" rx="1" fill="#e4ece4"/><rect x="0.9" y="0.9" width="26.8" height="24.2" rx="0.6" fill="#0a880a"/><g stroke="#eef8ee" stroke-width="0.9" fill="#fff"><path d="M4.5 3.5 V22 H25" fill="none"/><circle cx="4.5" cy="3.5" r="1.1" stroke="none"/><circle cx="4.5" cy="22" r="1.2" stroke="none"/><circle cx="24.6" cy="22" r="1.2" stroke="none"/></g><g stroke="#d8f0d8" stroke-width="0.9" fill="none"><rect x="6.5" y="6" width="16" height="14" stroke-dasharray="1.5 1"/><circle cx="13.5" cy="12.5" r="4.6" stroke="#fff" stroke-width="1.1"/><path d="M17 16 L20.5 19" stroke="#fff" stroke-width="1.8"/></g></svg>
<svg class="a" style="left:575.8px;top:360px" width="28.60" height="27.70" viewBox="0 0 28.6 26"  preserveAspectRatio="none"><rect x="0" y="0" width="28.6" height="26" rx="1" fill="#e4ece4"/><rect x="0.9" y="0.9" width="26.8" height="24.2" rx="0.6" fill="#0a880a"/><g stroke="#eef8ee" stroke-width="0.9" fill="#fff"><path d="M4.5 3.5 V22 H25" fill="none"/><circle cx="4.5" cy="3.5" r="1.1" stroke="none"/><circle cx="4.5" cy="22" r="1.2" stroke="none"/><circle cx="24.6" cy="22" r="1.2" stroke="none"/></g><text x="7" y="9.5" font-family="Liberation Mono,monospace" font-size="7" fill="#fff">Y</text><text x="18.5" y="12" font-family="Liberation Mono,monospace" font-size="7" fill="#fff">X</text><text x="6.5" y="20" font-family="Liberation Mono,monospace" font-size="7.6" fill="#fff" textLength="18" lengthAdjust="spacingAndGlyphs">Auto</text></svg>
<svg class="a" style="left:575.8px;top:389.8px" width="28.60" height="27.60" viewBox="0 0 28.6 26"  preserveAspectRatio="none"><rect x="0" y="0" width="28.6" height="26" rx="1" fill="#e4ece4"/><rect x="0.9" y="0.9" width="26.8" height="24.2" rx="0.6" fill="#0a880a"/><g stroke="#eef8ee" stroke-width="0.9" fill="#fff"><path d="M4.5 3.5 V22 H25" fill="none"/><circle cx="4.5" cy="3.5" r="1.1" stroke="none"/><circle cx="4.5" cy="22" r="1.2" stroke="none"/><circle cx="24.6" cy="22" r="1.2" stroke="none"/></g><text x="7" y="9.5" font-family="Liberation Mono,monospace" font-size="7" fill="#fff">y</text><text x="18.5" y="11.5" font-family="Liberation Mono,monospace" font-size="6.4" fill="#fff">x</text><text x="6.5" y="20.5" font-family="Liberation Serif,serif" font-size="10" fill="#fff">Re</text></svg>
<svg class="a" style="left:575.8px;top:419.2px" width="28.6" height="12.2" viewBox="0 0 28.6 12.6" preserveAspectRatio="none"><rect width="28.6" height="12.6" rx="1" fill="#e4ece4"/><rect x="0.9" y="0.9" width="26.8" height="10.8" rx="0.6" fill="#0a880a"/><g stroke="#fff" stroke-width="1" fill="#fff"><path d="M4.5 0 V10 H25" fill="none"/><circle cx="4.5" cy="10" r="1.2" stroke="none"/><circle cx="24.6" cy="10" r="1.2" stroke="none"/></g></svg>
<svg class="a" style="left:711.00px;top:141.60px" width="10" height="8" viewBox="-5 -4 10 8"><path d="M-3.9 -1.9 L0 2 L3.9 -1.9" fill="none" stroke="#505050" stroke-width="0.95"/></svg>
<svg class="a" style="left:735.10px;top:207.25px" width="10" height="8" viewBox="-5 -4 10 8"><path d="M-3.9 -1.9 L0 2 L3.9 -1.9" fill="none" stroke="#505050" stroke-width="0.95"/></svg>
<svg class="a" style="left:881.80px;top:205.50px" width="10" height="8" viewBox="-5 -4 10 8"><path d="M-3.9 -1.9 L0 2 L3.9 -1.9" fill="none" stroke="#505050" stroke-width="0.95"/></svg>
<svg class="a" style="left:787.30px;top:369.00px" width="10" height="8" viewBox="-5 -4 10 8"><path d="M-3.9 -1.9 L0 2 L3.9 -1.9" fill="none" stroke="#505050" stroke-width="0.95"/></svg>
<svg class="a" style="left:813.8px;top:480.1px" width="12.1" height="12.1" viewBox="0 0 12.1 12.1"><path d="M2.2 5.9 L5 9.2 L10.4 2.6" fill="none" stroke="#222" stroke-width="1.3"/></svg>
</div>
</div>
</body>
</html>
